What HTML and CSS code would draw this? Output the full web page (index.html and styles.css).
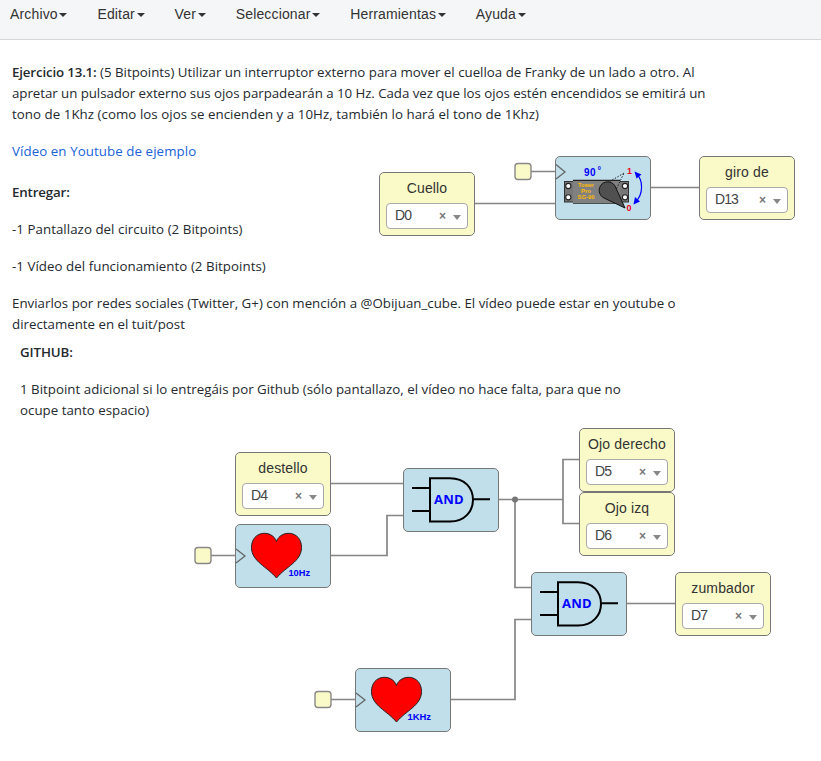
FILE: index.html
```html
<!DOCTYPE html>
<html lang="es">
<head>
<meta charset="utf-8">
<title>Ejercicio 13.1</title>
<link rel="stylesheet" href="styles.css">
</head>
<body>
<nav class="menu">
  <a class="menu-item">Archivo<i class="caret"></i></a>
  <a class="menu-item">Editar<i class="caret"></i></a>
  <a class="menu-item">Ver<i class="caret"></i></a>
  <a class="menu-item">Seleccionar<i class="caret"></i></a>
  <a class="menu-item">Herramientas<i class="caret"></i></a>
  <a class="menu-item">Ayuda<i class="caret"></i></a>
</nav>
<main class="canvas">
  <section class="note note-main">
    <p><b>Ejercicio 13.1:</b> (5 Bitpoints) Utilizar un interruptor externo para mover el cuelloa de Franky de un lado a otro. Al<br><span class="tight">apretar un pulsador externo sus ojos parpadearán a 10 Hz. Cada vez que los ojos estén encendidos se emitirá un</span><br><span class="loose">tono de 1Khz (como los ojos se encienden y a 10Hz, también lo hará el tono de 1Khz)</span></p>
    <p class="link-row"><a class="link">Vídeo en Youtube de ejemplo</a></p>
    <p><b>Entregar:</b></p>
    <p class="loose">-1 Pantallazo del circuito (2 Bitpoints)</p>
    <p class="loose">-1 Vídeo del funcionamiento (2 Bitpoints)</p>
    <p><span class="even">Enviarlos por redes sociales (Twitter, G+) con mención a @Obijuan_cube. El vídeo puede estar en youtube o</span><br>directamente en el tuit/post</p>
  </section>
  <section class="note note-github">
    <p><b class="title">GITHUB:</b></p>
    <p class="even">1 Bitpoint adicional si lo entregáis por Github (sólo pantallazo, el vídeo no hace falta, para que no<br>ocupe tanto espacio)</p>
  </section>

  <svg class="wires" viewBox="0 40 821 721" width="821" height="721">
    <g class="wire">
      <path d="M531 171.5H556M474 203.5H556M650 187.5H700"/>
      <path d="M330 483.5H404M330 555.5H387V515.5H404"/>
      <path d="M498 499.5H563M580 459.5H563V523.5H580"/>
      <path d="M515 499V587.5H532M626 603.5H676M450 699.5H515V619.5H532"/>
      <path d="M211 555.5H236M331 699.5H356"/>
    </g>
    <circle class="junction" cx="515" cy="499.5" r="3"/>
    <g class="stub">
      <rect x="515" y="163.5" width="16" height="16" rx="3"/>
      <rect x="195" y="547.5" width="16" height="16" rx="3"/>
      <rect x="315" y="691.5" width="16" height="16" rx="3"/>
    </g>
  </svg>

  <div class="block io cuello"><span class="name">Cuello</span><div class="select"><span class="pin">D0</span><b class="clear">×</b><i class="arrow"></i></div></div>
  <div class="block io giro"><span class="name">giro de</span><div class="select"><span class="pin">D13</span><b class="clear">×</b><i class="arrow"></i></div></div>
  <div class="block io destello"><span class="name">destello</span><div class="select"><span class="pin">D4</span><b class="clear">×</b><i class="arrow"></i></div></div>
  <div class="block io ojo-derecho"><span class="name">Ojo derecho</span><div class="select"><span class="pin">D5</span><b class="clear">×</b><i class="arrow"></i></div></div>
  <div class="block io ojo-izq"><span class="name">Ojo izq</span><div class="select"><span class="pin">D6</span><b class="clear">×</b><i class="arrow"></i></div></div>
  <div class="block io zumbador"><span class="name">zumbador</span><div class="select"><span class="pin">D7</span><b class="clear">×</b><i class="arrow"></i></div></div>

  <div class="block logic servo">
    <svg viewBox="0 0 96 64" width="96" height="64">
      <path class="clock" d="M1 8.5L10 16L1 23"/>
      <text class="blue" x="29" y="20" font-size="10" textLength="11.5">90</text>
      <text class="blue" x="42.8" y="14" font-size="5.5">0</text>
      <rect x="9.500" y="25.500" width="64" height="20.500" fill="#777" stroke="#333"/>
      <path d="M18 24.500H65M18 47H65" stroke="#222" stroke-width="1.500"/>
      <rect x="18" y="25" width="47" height="22" fill="#808080"/>
      <g fill="#fff" stroke="#222" stroke-width="1.100"><circle cx="13.300" cy="30" r="2.600"/><circle cx="13.300" cy="41.300" r="2.600"/><circle cx="70" cy="30" r="2.600"/><circle cx="70" cy="41.300" r="2.600"/></g>
      <g class="brand"><text x="31" y="31.200" textLength="16" lengthAdjust="spacingAndGlyphs">Tower</text><text x="31" y="37.200" textLength="10" lengthAdjust="spacingAndGlyphs">Pro</text><text x="31" y="43" textLength="17" lengthAdjust="spacingAndGlyphs">SG-90</text></g>
      <path d="M52 27L70 16.500M59 38L69 17" fill="none" stroke="#222" stroke-dasharray="1.500 1.500"/>
      <path d="M49 42A8.500 8.500 0 1 1 60.500 31L70 52Z" fill="#505050" stroke="#111" stroke-linejoin="round"/>
      <text class="red" x="72" y="18">1</text>
      <text class="red" x="71.500" y="55">0</text>
      <path d="M81 17.500C88.500 24 88.500 38 80.500 46" fill="none" stroke="#00f" stroke-width="1.200"/>
      <path d="M79.500 15.500L86.500 18.500L81.500 22.500ZM78.500 48.500L80 41L85 45.500Z" fill="#00f"/>
    </svg>
  </div>

  <div class="block logic heart-10hz">
    <svg viewBox="0 0 96 64" width="96" height="64">
      <path class="clock" d="M1 25L10 32L1 39"/>
      <path class="heart" d="M41.500 17.500C37.500 5.500 16.500 6 16.500 23.500C16.500 37.500 32 42.500 41.500 54C51 42.500 66.500 37.500 66.500 23.500C66.500 6 45.500 5.500 41.500 17.500Z"/>
      <text class="blue" x="53.500" y="52" font-size="9" textLength="21.500" lengthAdjust="spacingAndGlyphs">10Hz</text>
    </svg>
  </div>
  <div class="block logic heart-1khz">
    <svg viewBox="0 0 96 64" width="96" height="64">
      <path class="clock" d="M1 25L10 32L1 39"/>
      <path class="heart" d="M41.500 17.500C37.500 5.500 16.500 6 16.500 23.500C16.500 37.500 32 42.500 41.500 54C51 42.500 66.500 37.500 66.500 23.500C66.500 6 45.500 5.500 41.500 17.500Z"/>
      <text class="blue" x="52.500" y="52" font-size="9" textLength="23.500" lengthAdjust="spacingAndGlyphs">1KHz</text>
    </svg>
  </div>
  <div class="block logic and-eyes">
    <svg viewBox="0 0 96 64" width="96" height="64">
      <path class="gate" d="M9 20H27M9 43H27M70 31.300H87M27 10.300H47C62 10.300 70 20 70 32C70 43 62 53.600 47 53.600H27Z"/>
      <text class="and" x="31" y="36" textLength="29.500">AND</text>
    </svg>
  </div>
  <div class="block logic and-buzzer">
    <svg viewBox="0 0 96 64" width="96" height="64">
      <path class="gate" d="M9 20H27M9 43H27M70 31.300H87M27 10.300H47C62 10.300 70 20 70 32C70 43 62 53.600 47 53.600H27Z"/>
      <text class="and" x="31" y="36" textLength="29.500">AND</text>
    </svg>
  </div>
</main>
</body>
</html>
```
FILE: styles.css
```css
* { box-sizing: border-box; }
body { margin: 0; width: 821px; height: 761px; overflow: hidden; background: #fff; color: #333; font: 14px "Liberation Sans", sans-serif; }
.menu { display: flex; gap: 30px; height: 40px; padding: 3px 10px 0; background: #f5f6f8; border-bottom: 1px solid #d3d6da; }
.menu-item { display: flex; height: 21px; align-items: center; letter-spacing: .15px; }
.caret { margin-left: 1.7px; border: 4px solid transparent; border-top-color: #333; border-bottom: 0; margin-top: 3px; }
.canvas { position: relative; height: 721px; }
.note { position: absolute; font: 13.3px/21px "Open Sans", sans-serif; color: #24292e; white-space: nowrap; }
.note b { font-weight: 600; letter-spacing: -.15px; }
.note .title { letter-spacing: -.1px; }
.note .tight { letter-spacing: -.05px; }
.note .loose { letter-spacing: .045px; }
.note .even { letter-spacing: .013px; }
.note p { margin: 0 0 16px; }
.note .link-row { margin-bottom: 20px; }
.note-main { left: 12px; top: 22px; }
.note-github { left: 20px; top: 302px; }
.link { color: #1a63d8; letter-spacing: .08px; }
.wires { position: absolute; left: 0; top: 0; }
.wire { fill: none; stroke: #858585; stroke-width: 1.7; }
.junction { fill: #777; }
.stub { fill: #fafac8; stroke: #888; stroke-width: 1.4; }
.block { position: absolute; width: 96px; height: 64px; border: 1px solid #777; border-radius: 5px; }
.io { display: flex; flex-direction: column; align-items: center; padding-top: 7px; background: #fafac8; }
.name { height: 16px; line-height: 16px; letter-spacing: .15px; white-space: nowrap; }
.select { display: flex; align-items: center; width: 82px; height: 26px; margin-top: 7px; padding: 0 6px 0 8px; background: #fff; border: 1px solid #aaa; border-radius: 4px; color: #444; }
.pin { flex: 1; letter-spacing: -.9px; line-height: 22px; padding-bottom: 2px; }
.clear { margin-right: 7px; font-size: 12px; color: #777; }
.arrow { border: 4px solid transparent; border-top: 5px solid #888; border-bottom: 0; margin-top: 3px; }
.logic { background: #c0dfeb; }
.logic svg { display: block; margin: -1px; }
.cuello { left: 379px; top: 132px; }
.giro { left: 699px; top: 116px; }
.destello { left: 235px; top: 412px; }
.ojo-derecho { left: 579px; top: 388px; }
.ojo-izq { left: 579px; top: 452px; }
.zumbador { left: 675px; top: 532px; }
.servo { left: 555px; top: 116px; }
.heart-10hz { left: 235px; top: 484px; }
.heart-1khz { left: 355px; top: 628px; }
.and-eyes { left: 403px; top: 428px; }
.and-buzzer { left: 531px; top: 532px; }
.clock { fill: none; stroke: #666; stroke-width: 1.3; }
.heart { fill: #f00; stroke: #222; stroke-width: 1; }
.gate { fill: none; stroke: #000; stroke-width: 2; }
.blue { fill: #00f; font-weight: bold; }
.red { fill: #f00020; font-weight: bold; font-size: 9px; }
.and { fill: #00f; font: 700 13px "Open Sans", sans-serif; }
.brand { fill: #fb0; font-weight: bold; font-size: 6px; text-anchor: middle; }
```
